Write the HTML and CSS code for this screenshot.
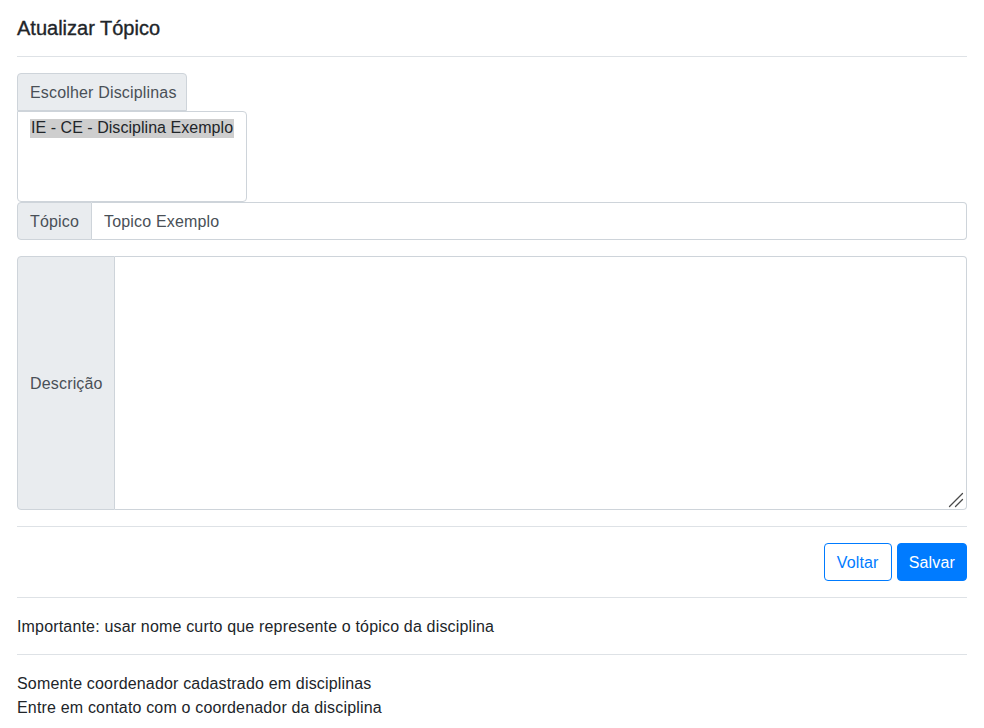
FILE: index.html
```html
<!DOCTYPE html>
<html lang="pt-BR">
<head>
<meta charset="utf-8">
<title>Atualizar Tópico</title>
<link rel="stylesheet" href="styles.css">
</head>
<body>
<div class="panel">
  <div class="panel-header">
    <h5 class="panel-title">Atualizar Tópico</h5>
  </div>
  <div class="panel-body">
    <div class="pick">
      <button class="pick-btn" type="button">Escolher Disciplinas</button>
      <select class="pick-list" multiple>
        <option selected>IE - CE - Disciplina Exemplo</option>
      </select>
    </div>
    <div class="input-group">
      <span class="addon">Tópico</span>
      <input class="field" type="text" value="Topico Exemplo">
    </div>
    <div class="input-group tall">
      <span class="addon addon-wide">Descrição</span>
      <textarea class="field area"></textarea>
      <svg class="grip" width="16" height="16" viewBox="0 0 16 16" aria-hidden="true">
        <path d="M1.5 14.5 L14.5 1.5 M7.5 14.5 L14.5 7.5" stroke="#4a4a4a" stroke-width="1.3" stroke-linecap="round" fill="none"/>
      </svg>
    </div>
  </div>
  <div class="panel-footer">
    <button class="btn btn-outline" type="button">Voltar</button>
    <button class="btn btn-primary" type="button">Salvar</button>
  </div>
  <div class="note">Importante: usar nome curto que represente o tópico da disciplina</div>
  <div class="note">Somente coordenador cadastrado em disciplinas<br>Entre em contato com o coordenador da disciplina</div>
</div>
</body>
</html>
```
FILE: styles.css
```css
* { box-sizing: border-box; }
body {
  margin: 0;
  background: #fff;
  font-family: "Liberation Sans", Arial, sans-serif;
  font-size: 16px;
  line-height: 1.5;
  letter-spacing: 0.17px;
  color: #212529;
}
.panel {
  padding: 0 17px 0 17px;
}
.panel-header {
  padding: 16px 0;
  border-bottom: 1px solid #dee2e6;
}
.panel-title {
  margin: 0;
  font-size: 20px;
  font-weight: 400;
  line-height: 1.2;
  letter-spacing: 0;
  -webkit-text-stroke: 0.35px #212529;
}
.panel-body {
  padding: 16px 0;
}
.pick {
  display: flex;
  flex-direction: column;
  align-items: flex-start;
}
.pick-btn {
  font: inherit;
  letter-spacing: inherit;
  color: #495057;
  background: #e9ecef;
  border: 1px solid #ced4da;
  border-radius: 4px 4px 0 0;
  height: 38px;
  padding: 1px 9px 0 12px;
  white-space: nowrap;
  text-align: left;
}
.pick-list {
  font: inherit;
  letter-spacing: 0.04px;
  color: #212529;
  width: 230px;
  height: 91px;
  border: 1px solid #ced4da;
  border-radius: 0 4px 4px 4px;
  padding: 4px 12px;
  margin-top: 0;
  overflow: hidden;
  outline: none;
}
.pick-list option {
  display: inline-block;
  padding: 0 1px;
  line-height: 20px;
}
.pick-list option:checked {
  background: #cecece linear-gradient(#cecece, #cecece);
  color: #212529;
}
.input-group {
  position: relative;
  display: flex;
  height: 38px;
}
.input-group.tall {
  margin-top: 16px;
  height: 254px;
}
.addon {
  display: flex;
  align-items: center;
  padding: 1px 12px 0;
  color: #495057;
  background: #e9ecef;
  border: 1px solid #ced4da;
  border-radius: 4px 0 0 4px;
  white-space: nowrap;
}
.addon-wide {
  width: 98px;
}
.field {
  flex: 1;
  font: inherit;
  letter-spacing: inherit;
  color: #495057;
  border: 1px solid #ced4da;
  border-left: none;
  border-radius: 0 4px 4px 0;
  padding: 7px 12px 5px;
  outline: none;
  background: #fff;
}
.area {
  resize: none;
}
.grip {
  position: absolute;
  right: 3px;
  bottom: 2px;
  pointer-events: none;
}
.panel-footer {
  display: flex;
  justify-content: flex-end;
  gap: 5px;
  padding: 16px 0;
  border-top: 1px solid #dee2e6;
}
.btn {
  font: inherit;
  letter-spacing: inherit;
  height: 38px;
  padding: 1px 12px 0;
  border-radius: 4px;
  border: 1px solid #007bff;
}
.btn-outline {
  color: #007bff;
  background: #fff;
  padding-left: 12px;
  padding-right: 12px;
}
.btn-primary {
  color: #fff;
  background: #007bff;
  padding-left: 11px;
  padding-right: 11px;
}
.note {
  padding: 17px 0 15px;
  border-top: 1px solid #dee2e6;
}
```
